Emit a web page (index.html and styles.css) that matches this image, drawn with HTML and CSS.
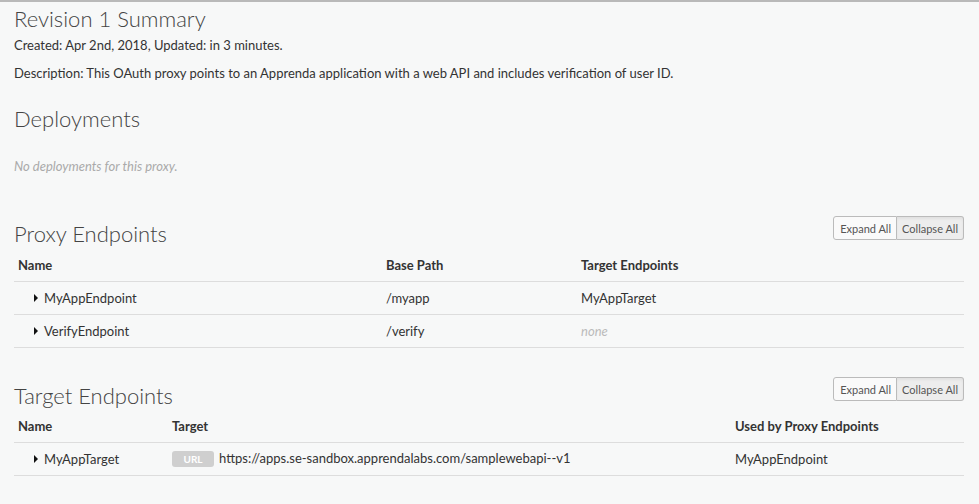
FILE: index.html
```html
<!DOCTYPE html>
<html>
<head>
<meta charset="utf-8">
<link rel="stylesheet" href="styles.css">
</head>
<body>
<div class="page">
  <h2 class="title">Revision 1 Summary</h2>
  <p class="meta">Created: Apr 2nd, 2018, Updated: in 3 minutes.</p>
  <p class="desc">Description: This OAuth proxy points to an Apprenda application with a web API and includes verification of user ID.</p>

  <h2 class="section deploy">Deployments</h2>
  <p class="empty">No deployments for this proxy.</p>

  <div class="sec-head proxy">
    <h2 class="section">Proxy Endpoints</h2>
    <div class="btn-group"><button class="btn">Expand All</button><button class="btn active">Collapse All</button></div>
  </div>
  <div class="table t-proxy">
    <div class="row head"><div>Name</div><div>Base Path</div><div>Target Endpoints</div></div>
    <div class="row"><div class="name"><span class="caret"></span>MyAppEndpoint</div><div>/myapp</div><div>MyAppTarget</div></div>
    <div class="row"><div class="name"><span class="caret"></span>VerifyEndpoint</div><div>/verify</div><div class="none">none</div></div>
  </div>

  <div class="sec-head target">
    <h2 class="section">Target Endpoints</h2>
    <div class="btn-group"><button class="btn">Expand All</button><button class="btn active">Collapse All</button></div>
  </div>
  <div class="table t-target">
    <div class="row head"><div>Name</div><div>Target</div><div>Used by Proxy Endpoints</div></div>
    <div class="row"><div class="name"><span class="caret"></span>MyAppTarget</div><div><span class="badge">URL</span>https://apps.se-sandbox.apprendalabs.com/samplewebapi--v1</div><div>MyAppEndpoint</div></div>
  </div>
</div>
</body>
</html>
```

FILE: styles.css
```css
html, body { margin: 0; padding: 0; }
body {
  background: #f7f8f8;
  border-top: 2px solid #b9b9b9;
  font-family: Lato, "Open Sans", sans-serif;
  font-size: 13px;
  color: #333;
}
.page { padding: 0 15px 0 14px; }
h2 { margin: 0; font-weight: 300; color: #444; font-size: 22px; line-height: 26px; }
.title { padding-top: 4px; }
.meta { margin: 4px 0 0; line-height: 18px; }
.desc { margin: 10px 0 0; line-height: 18px; }
.section.deploy { margin-top: 24px; }
.empty { margin: 25px 0 0; font-style: italic; color: #aaa; line-height: 18px; }
.sec-head { display: flex; justify-content: space-between; align-items: flex-end; }
.sec-head.proxy { margin-top: 41px; }
.sec-head.target { margin-top: 29px; }
.btn-group { display: flex; margin-bottom: 7px; }
.sec-head.target .btn-group { margin-bottom: 8px; }
.btn {
  font-family: Lato, sans-serif; font-size: 11px; color: #555;
  background: #fafafa; border: 1px solid #bbb; height: 24px; padding: 0 6px; margin: 0;
}
.btn:first-child { border-radius: 3px 0 0 3px; padding: 0 5px 0 6px; }
.btn.active { background: #ededed; border-left: 0; border-radius: 0 3px 3px 0; padding: 0 5px; box-shadow: inset 0 2px 3px rgba(0,0,0,0.05); }
.table { margin-top: 2px; }
.t-target { margin-top: 1px; }
.row { display: grid; border-bottom: 1px solid #ddd; height: 31px; padding-bottom: 1px; align-items: center; }
.row.head { font-weight: 700; color: #333; }
.row > div { padding-left: 4px; }
.t-proxy .row { grid-template-columns: 368px 195px 1fr; }
.t-target .row { grid-template-columns: 154px 563px 1fr; }
.name { display: flex; align-items: center; padding-left: 20px !important; }
.caret { width: 0; height: 0; border-top: 4px solid transparent; border-bottom: 4px solid transparent; border-left: 4px solid #111; margin-right: 6px; }
.none { font-style: italic; color: #bbb; }
.badge {
  display: inline-block; background: #cfcfcf; color: #fff; font-size: 10px; font-weight: 700;
  border-radius: 3px; width: 42px; height: 16px; line-height: 16px; text-align: center; margin-right: 5px; vertical-align: middle;
}
```
